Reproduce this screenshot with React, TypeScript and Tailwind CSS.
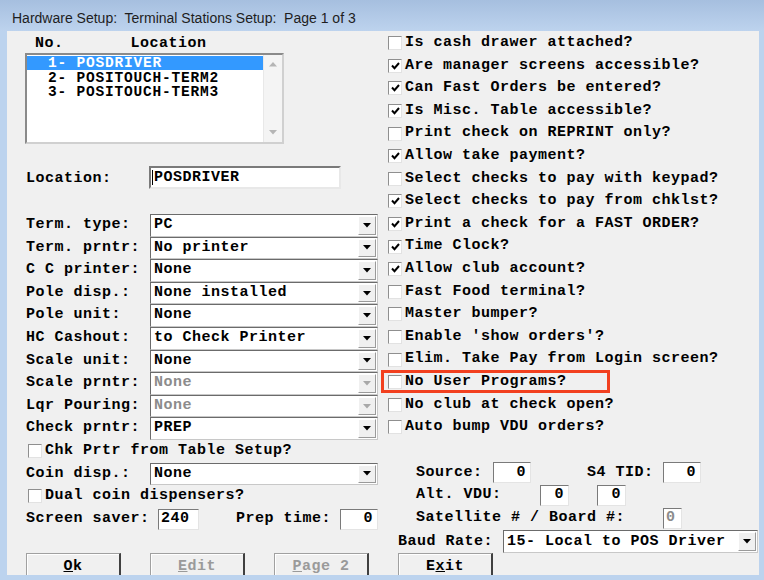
const mono = "font-['Liberation_Mono',monospace] font-bold text-[15px] tracking-[0.5px] text-black";

function CheckBox({ checked }: { checked?: boolean }) {
  return (
    <span className="flex h-[14px] w-[14px] shrink-0 items-center justify-center border border-t-[#8f8f8f] border-l-[#8f8f8f] border-r-[#e2e2e2] border-b-[#e2e2e2] bg-white">
      {checked && (
        <svg width="9" height="8" viewBox="0 0 9 8">
          <path d="M1 3.5 L3.5 6.2 L8 1" fill="none" stroke="#000" strokeWidth="2" />
        </svg>
      )}
    </span>
  );
}

function DownArrow({ disabled }: { disabled?: boolean }) {
  return (
    <svg width="8" height="5" viewBox="0 0 8 5">
      <polygon points="0,0 8,0 4,4.5" fill={disabled ? "#a8a8a8" : "#000"} />
    </svg>
  );
}

function Combo({ value, disabled, className }: { value: string; disabled?: boolean; className: string }) {
  return (
    <div
      className={`flex h-full items-stretch border border-t-[#6b6b6b] border-l-[#6b6b6b] border-r-[#c8c8c8] border-b-[#c8c8c8] bg-white ${className}`}
    >
      <span className={`flex flex-1 items-center pl-[3px] ${disabled ? "text-[#8c8c8c]" : ""}`}>{value}</span>
      <span className="my-[1px] mr-[1px] flex w-[18px] items-center justify-center border border-t-white border-l-white border-r-[#9a9a9a] border-b-[#9a9a9a] bg-[#f0f0f0]">
        <DownArrow disabled={disabled} />
      </span>
    </div>
  );
}

function Field({ value, className, right, disabled }: { value: string; className: string; right?: boolean; disabled?: boolean }) {
  return (
    <div
      className={`flex h-[21px] items-center border border-t-[#7a7a7a] border-l-[#7a7a7a] border-r-[#e4e4e4] border-b-[#e4e4e4] bg-white px-[4px] ${right ? "justify-end" : ""} ${disabled ? "text-[#8c8c8c] bg-[#f7f7f7]" : ""} ${className}`}
    >
      {value}
    </div>
  );
}

function Button({ children, disabled }: { children: React.ReactNode; disabled?: boolean }) {
  return (
    <div
      className={`flex h-[25px] w-[95px] shrink-0 items-center justify-center border-t border-l border-r-2 border-b-2 border-t-[#a0a0a0] border-l-[#a0a0a0] border-r-[#404040] border-b-[#404040] bg-[#f0f0f0] pt-[4px] shadow-[inset_1px_1px_0_#ffffff] ${disabled ? "text-[#9a9a9a]" : ""}`}
    >
      {children}
    </div>
  );
}

const combos: [string, string, boolean?][] = [
  ["Term. type:", "PC"],
  ["Term. prntr:", "No printer"],
  ["C C printer:", "None"],
  ["Pole disp.:", "None installed"],
  ["Pole unit:", "None"],
  ["HC Cashout:", "to Check Printer"],
  ["Scale unit:", "None"],
  ["Scale prntr:", "None", true],
  ["Lqr Pouring:", "None", true],
  ["Check prntr:", "PREP"],
];

const options: [string, boolean][] = [
  ["Is cash drawer attached?", false],
  ["Are manager screens accessible?", true],
  ["Can Fast Orders be entered?", true],
  ["Is Misc. Table accessible?", true],
  ["Print check on REPRINT only?", false],
  ["Allow take payment?", true],
  ["Select checks to pay with keypad?", false],
  ["Select checks to pay from chklst?", true],
  ["Print a check for a FAST ORDER?", true],
  ["Time Clock?", true],
  ["Allow club account?", true],
  ["Fast Food terminal?", false],
  ["Master bumper?", false],
  ["Enable 'show orders'?", false],
  ["Elim. Take Pay from Login screen?", false],
  ["No User Programs?", false],
  ["No club at check open?", false],
  ["Auto bump VDU orders?", false],
];

const stations = ["1- POSDRIVER", "2- POSITOUCH-TERM2", "3- POSITOUCH-TERM3"];

export default function App() {
  return (
    <div className="h-[580px] w-[764px] overflow-hidden bg-[#bcd3ee]">
      {/* title bar */}
      <div className="flex h-[31px] items-center bg-gradient-to-b from-[#a6bfdf] to-[#bdd3ee] pl-[12px] pt-[5px] font-['Liberation_Sans',sans-serif] text-[14px] text-[#1e1e1e] whitespace-pre">
        Hardware Setup:  Terminal Stations Setup:  Page 1 of 3
      </div>

      <div className={`ml-[7px] flex h-[544px] w-[752px] overflow-hidden bg-[#f0f0f0] ${mono}`}>
        {/* left column */}
        <div className="flex w-[373px] shrink-0 flex-col pt-[1px] [&>*]:shrink-0">
          <div className="flex h-[21px] items-center">
            <span className="ml-[28px] translate-y-[2px]">No.</span>
            <span className="ml-[67px] translate-y-[2px]">Location</span>
          </div>

          <div className="ml-[18px] flex h-[91px] w-[259px] border-2 border-t-[#8a8a8a] border-l-[#8a8a8a] border-r-[#d0d0d0] border-b-[#d0d0d0] bg-white">
            <div className="flex flex-1 flex-col pt-[1px] text-[14.5px] leading-[14px]">
              {stations.map((s, i) => (
                <div
                  key={s}
                  className={`flex h-[14.4px] items-center pl-[21px] tracking-[0.8px] whitespace-pre ${i === 0 ? "bg-[#3399ff] text-white" : ""}`}
                >
                  {s}
                </div>
              ))}
            </div>
            <div className="flex w-[19px] flex-col items-center justify-between border-l border-[#e8e8e8] bg-[#f4f4f4] py-[7px]">
              <svg width="8" height="5" viewBox="0 0 8 5">
                <polygon points="0,4.5 8,4.5 4,0" fill="#b5b5b5" />
              </svg>
              <svg width="8" height="5" viewBox="0 0 8 5">
                <polygon points="0,0 8,0 4,4.5" fill="#b5b5b5" />
              </svg>
            </div>
          </div>

          <div className="mt-[22px] flex h-[23px] items-center">
            <span className="ml-[19px] w-[123px] translate-y-[2px]">Location:</span>
            <div className="flex h-full w-[192px] items-center border-2 border-t-[#7a7a7a] border-l-[#7a7a7a] border-r-[#e8e8e8] border-b-[#e8e8e8] bg-white pl-[1px]">
              <span className="mr-[1px] h-[15px] w-px bg-black" />
              <span className="translate-y-[1px]">POSDRIVER</span>
            </div>
          </div>

          <div className="mt-[25px] flex flex-col">
            {combos.map(([label, value, disabled]) => (
              <div key={label} className="flex h-[22.6px] items-center">
                <span className="ml-[19px] w-[124px] shrink-0">{label}</span>
                <Combo value={value} disabled={disabled} className="w-[228px]" />
              </div>
            ))}
            <div className="flex h-[22.6px] items-center gap-[3px] pl-[21px]">
              <CheckBox />
              Chk Prtr from Table Setup?
            </div>
            <div className="flex h-[22.6px] items-center">
              <span className="ml-[19px] w-[124px] shrink-0">Coin disp.:</span>
              <Combo value="None" className="w-[228px]" />
            </div>
            <div className="flex h-[22.6px] items-center gap-[3px] pl-[21px]">
              <CheckBox />
              Dual coin dispensers?
            </div>
            <div className="flex h-[22.6px] items-center">
              <span className="ml-[19px] w-[132px] shrink-0">Screen saver:</span>
              <Field value="240" className="w-[41px] !px-[2px]" />
              <span className="ml-[37px] w-[104px] shrink-0">Prep time:</span>
              <Field value="0" right className="w-[38px]" />
            </div>
          </div>

          <div className="mt-[23px] flex gap-[29px] pl-[19px]">
            <Button>
              <u>O</u>k
            </Button>
            <Button disabled>
              <u>E</u>dit
            </Button>
            <Button disabled>
              <u>P</u>age 2
            </Button>
          </div>
        </div>

        {/* right column */}
        <div className="flex flex-1 flex-col pt-[1px] [&>*]:shrink-0">
          <div className="flex flex-col">
            {options.map(([text, checked]) => (
              <div key={text} className="relative flex h-[22.6px] items-center gap-[3px] pl-[8px] whitespace-pre">
                <CheckBox checked={checked} />
                {text}
                {text === "No User Programs?" && (
                  <span className="absolute -top-[1px] left-[1px] h-[23px] w-[229px] border-[3px] border-[#f2401f]" />
                )}
              </div>
            ))}
          </div>

          <div className="mt-[23px] flex flex-col">
            <div className="flex h-[22.6px] items-center pl-[36px]">
              <span className="w-[77px] shrink-0">Source:</span>
              <Field value="0" right className="w-[38px]" />
              <span className="ml-[56px] w-[76px] shrink-0">S4 TID:</span>
              <Field value="0" right className="w-[38px]" />
            </div>
            <div className="flex h-[22.6px] items-center pl-[36px]">
              <span className="w-[124px] shrink-0">Alt. VDU:</span>
              <Field value="0" right className="w-[29px]" />
              <Field value="0" right className="ml-[28px] w-[29px]" />
            </div>
            <div className="flex h-[22.6px] items-center pl-[36px]">
              <span className="w-[247px] shrink-0 whitespace-pre">Satellite # / Board #:</span>
              <Field value="0" disabled className="w-[19px] !px-[2px]" />
            </div>
            <div className="mt-[1px] flex h-[22.6px] items-center pl-[18px]">
              <span className="w-[105px] shrink-0">Baud Rate:</span>
              <Combo value="15- Local to POS Driver" className="w-[255px]" />
            </div>
          </div>

          <div className="pl-[18px]">
            <Button>
              E<u>x</u>it
            </Button>
          </div>
        </div>
      </div>
    </div>
  );
}
